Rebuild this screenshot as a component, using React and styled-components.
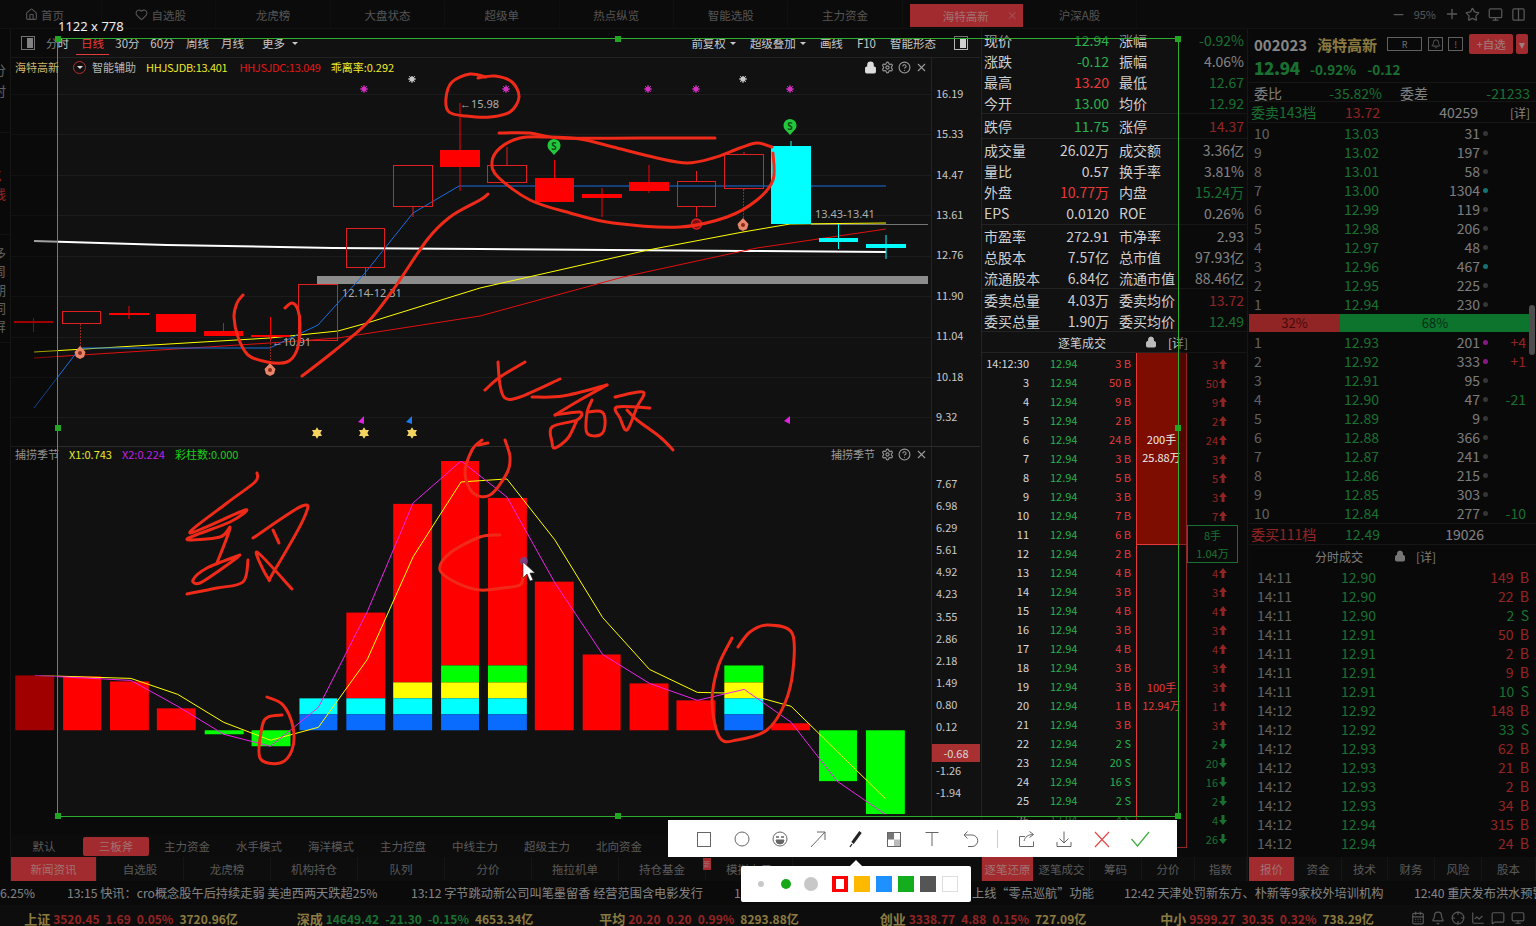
import React from 'react';
import styled, { createGlobalStyle } from 'styled-components';
import {
  House, Heart, Minus, Plus, Star, Monitor, Columns2, Lock, Settings, CircleHelp, X, Bell,
  CalendarDays, ChartLine, MessageSquare, Crosshair,
} from 'lucide-react';

const GREEN = '#28b24f';
const RED = '#e63a3a';
const ACTIVE = '#ff4449';
const LINE = '#232323';

const GlobalStyle = createGlobalStyle`
  html, body { margin: 0; padding: 0; background: #0b0b0b; overflow: hidden; }
  body { font-family: "Noto Sans CJK SC", "Noto Sans", sans-serif; color: #ccc; }
  * { box-sizing: border-box; }
`;

const Page = styled.div`
  position: relative;
  width: 1536px;
  height: 926px;
  overflow: hidden;
  display: flex;
  flex-direction: column;
  background: #111;
`;

/* ---------- top tabs ---------- */
const TopBar = styled.div`
  display: flex;
  height: 29px;
  flex-shrink: 0;
  background: #121212;
  border-bottom: 1px solid #1e1e1e;
`;
const TopTab = styled.div`
  display: flex;
  align-items: center;
  justify-content: center;
  gap: 3px;
  position: relative;
  width: ${p => p.$w || 114.4}px;
  margin-left: ${p => p.$ml || 0}px;
  padding: 0 ${p => p.$pr || 0}px 0 ${p => p.$pl || 0}px;
  height: ${p => (p.$active ? 23 : 27)}px;
  margin-top: ${p => (p.$active ? 4 : 1)}px;
  font-size: 11.5px;
  color: ${p => (p.$active ? '#ffb4b4' : '#868686')};
  background: ${p => (p.$active ? ACTIVE : 'transparent')};
  border-right: 1px solid ${p => (p.$active ? 'transparent' : '#1a1a1a')};
`;
const TabClose = styled.span`
  position: absolute;
  right: 4px;
  top: 3px;
  font-size: 11px;
  color: #ff8f8f;
`;
const TopTools = styled.div`
  margin-left: auto;
  display: flex;
  align-items: center;
  gap: 8px;
  padding-right: 10px;
  color: #8a8a8a;
  font-size: 11px;
`;
const StarTool = styled(Star)`
  margin-left: -3px;
`;

/* ---------- workspace ---------- */
const Workspace = styled.div`
  display: flex;
  height: 852px;
  flex-shrink: 0;
`;
const SideStrip = styled.div`
  width: 10px;
  flex-shrink: 0;
  overflow: hidden;
  display: flex;
  flex-direction: column;
  background: #0f0f0f;
`;
const SideGroup = styled.div`
  height: ${p => p.$h}px;
  padding-top: ${p => p.$pt}px;
  margin-left: -7px;
  width: 18px;
  font-size: 13px;
  line-height: ${p => p.$lh}px;
  color: ${p => (p.$red ? RED : '#999')};
  border-bottom: 1px solid #1c1c1c;
`;
const ChartColumn = styled.div`
  width: 970px;
  flex-shrink: 0;
  display: flex;
  flex-direction: column;
  border-left: 1px solid ${LINE};
`;
const ChartToolbar = styled.div`
  height: 29px;
  flex-shrink: 0;
  display: flex;
  align-items: center;
  padding: 0 12px 0 10px;
  font-size: 11.5px;
  white-space: nowrap;
  border-bottom: 1px solid ${LINE};
  background: #111;
`;
const PanelToggle = styled.span`
  display: inline-flex;
  justify-content: flex-end;
  flex-shrink: 0;
  width: 14px;
  height: 14px;
  border: 1px solid #b5b5b5;
  padding: 1px;
  margin-left: ${p => p.$ml || 0}px;
  &::after { content: ''; width: 6px; background: #cfcfcf; }
`;
const PeriodTab = styled.span`
  flex-shrink: 0;
  width: 35px;
  margin-left: ${p => p.$ml || 0}px;
  text-align: center;
  color: ${p => (p.$active ? RED : '#c4c4c4')};
  position: relative;
  line-height: 17px;
  &::after {
    content: '';
    display: ${p => (p.$active ? 'block' : 'none')};
    position: absolute;
    left: 1px;
    right: 1px;
    bottom: -3px;
    height: 1px;
    background: ${RED};
  }
`;
const ToolItem = styled.span`
  display: inline-flex;
  flex-shrink: 0;
  align-items: center;
  gap: ${p => p.$gap || 4}px;
  margin-left: ${p => (p.$push ? 'auto' : `${p.$ml || 0}px`)};
  color: #c8c8c8;
`;
const Caret = styled.i`
  width: 0;
  height: 0;
  border-left: 3px solid transparent;
  border-right: 3px solid transparent;
  border-top: 3px solid #c8c8c8;
`;
const Pane = styled.div`
  display: flex;
  height: ${p => p.$h}px;
  flex-shrink: 0;
  border-bottom: 1px solid ${p => p.$line || 'transparent'};
`;
const PlotColumn = styled.div`
  width: 920px;
  display: flex;
  flex-direction: column;
`;
const PaneHeader = styled.div`
  display: flex;
  align-items: center;
  height: ${p => p.$h}px;
  flex-shrink: 0;
  padding-left: 4px;
  font-size: 11px;
  white-space: nowrap;
  position: relative;
  z-index: 1;
`;
const Legend = styled.span`
  color: ${p => p.$c};
  margin-right: ${p => p.$mr ?? 10}px;
  letter-spacing: ${p => (p.$tight ? '-0.3px' : 'normal')};
`;
const FoldIcon = styled.span`
  width: 13px;
  height: 13px;
  border-radius: 50%;
  border: 1px solid #b03030;
  margin: 0 6px 0 14px;
  display: inline-flex;
  align-items: center;
  justify-content: center;
  &::after {
    content: '';
    border-left: 3px solid transparent;
    border-right: 3px solid transparent;
    border-top: 3px solid #ddd;
  }
`;
const PaneIcons = styled.span`
  margin-left: auto;
  display: flex;
  align-items: center;
  gap: 4px;
  padding-right: 3px;
  color: #9a9a9a;
`;
const Plot = styled.svg`
  display: block;
  flex: 1;
  width: 920px;
  overflow: hidden;
`;
const Axis = styled.div`
  position: relative;
  width: 49px;
  border-left: 1px solid ${LINE};
  padding-top: ${p => p.$top}px;
  font-size: 11px;
  color: #c8c8c8;
`;
const AxisLabel = styled.div`
  height: ${p => p.$step}px;
  line-height: ${p => p.$step}px;
  padding-left: 4px;
`;
const AxisBadge = styled.div`
  position: absolute;
  left: 0;
  right: 0;
  top: 297px;
  height: 18px;
  line-height: 18px;
  text-align: center;
  color: #d8d8d8;
  background: #a83030;
`;
const ModeRow = styled.div`
  display: flex;
  height: 22px;
  flex-shrink: 0;
  align-items: center;
  background: #141414;
  font-size: 11.5px;
  color: #8d8d8d;
`;
const ModeTab = styled.span`
  width: ${p => p.$w || 72}px;
  height: 19px;
  line-height: 18px;
  text-align: center;
  border-radius: 2px;
  margin: ${p => p.$m || 0};
  color: ${p => (p.$active ? '#ffb4b4' : '#8d8d8d')};
  background: ${p => (p.$active ? ACTIVE : 'transparent')};
`;
const BottomTabs = styled.div`
  display: flex;
  height: 24px;
  flex-shrink: 0;
  background: #161616;
  font-size: 11.5px;
`;
const BottomTab = styled.span`
  position: relative;
  width: ${p => p.$w}px;
  line-height: 24px;
  text-align: center;
  color: ${p => (p.$active ? '#ffb4b4' : '#8d8d8d')};
  background: ${p => (p.$active ? ACTIVE : 'transparent')};
  border-right: 1px solid #222;
`;
const NewBadge = styled.span`
  position: absolute;
  left: -3px;
  top: 1px;
  width: 8px;
  font-size: 7px;
  line-height: 12px;
  color: #ffb4b4;
  background: ${ACTIVE};
`;

/* ---------- quote column ---------- */
const InfoColumn = styled.div`
  width: 267px;
  flex-shrink: 0;
  margin-left: 1px;
  display: flex;
  flex-direction: column;
  border-left: 1px solid ${LINE};
  border-right: 1px solid ${LINE};
`;
const InfoGroup = styled.div`
  height: ${p => p.$h}px;
  flex-shrink: 0;
  display: flex;
  flex-direction: column;
  border-bottom: 1px solid ${LINE};
`;
const InfoRow = styled.div`
  flex: 1;
  display: grid;
  grid-template-columns: 125px 125px;
  column-gap: 10px;
  padding-left: 2px;
  align-items: center;
  font-size: 14px;
`;
const InfoCell = styled.div`
  display: flex;
  justify-content: space-between;
  white-space: nowrap;
  color: #cfcfcf;
`;
const Value = styled.span`
  color: ${p => p.$c || '#cfcfcf'};
`;
const TickHeader = styled.div`
  height: 21px;
  flex-shrink: 0;
  display: flex;
  align-items: center;
  font-size: 12px;
  padding-left: 76px;
  color: #cfcfcf;
  border-bottom: 1px solid ${LINE};
`;
const LockSlot = styled.span`
  display: inline-flex;
  margin-left: ${p => p.$ml}px;
  margin-right: ${p => p.$mr}px;
  color: #bbb;
`;
const TickBody = styled.div`
  flex: 1;
  min-height: 0;
  display: flex;
  overflow: hidden;
  padding-top: 1px;
`;
const TickList = styled.div`
  width: 154px;
  flex-shrink: 0;
  padding-left: 1px;
`;
const TickRow = styled.div`
  display: grid;
  grid-template-columns: 46px 50px 52px;
  height: 19px;
  line-height: 19px;
  font-size: 11px;
  text-align: right;
`;
const TickPrice = styled.span`
  color: ${GREEN};
  text-align: left;
  padding-left: 21px;
`;
const OrderColumn = styled.div`
  width: 51px;
  flex-shrink: 0;
  display: flex;
  flex-direction: column;
  margin-top: -1px;
`;
const OrderBlock = styled.div`
  height: ${p => p.$h}px;
  flex-shrink: 0;
  display: flex;
  flex-direction: column;
  align-items: center;
  justify-content: center;
  gap: 3px;
  font-size: 11px;
  line-height: 15px;
  white-space: nowrap;
  color: ${p => (p.$filled ? '#eee' : RED)};
  background: ${p => (p.$filled ? '#7c0d00' : 'transparent')};
  border: 1px solid ${RED};
  border-top: 0;
`;
const FlowColumn = styled.div`
  flex: 1;
`;
const FlowRow = styled.div`
  display: flex;
  align-items: center;
  justify-content: flex-end;
  gap: 1px;
  height: 19px;
  padding-right: 20px;
  font-size: 11px;
  color: ${p => p.$c};
`;
const FlowBox = styled.div`
  width: 51px;
  height: 38px;
  border: 1px solid ${GREEN};
  display: flex;
  flex-direction: column;
  align-items: center;
  justify-content: center;
  font-size: 11px;
  line-height: 18px;
  color: ${GREEN};
`;

/* ---------- order book column ---------- */
const BookColumn = styled.div`
  flex: 1;
  min-width: 0;
  position: relative;
  display: flex;
  flex-direction: column;
  margin-left: 1px;
  background: #0f0f0f;
`;
const StockHead = styled.div`
  height: 54px;
  flex-shrink: 0;
  padding: 4px 6px 0 5px;
  border-bottom: 1px solid ${LINE};
`;
const StockTitle = styled.div`
  display: flex;
  align-items: center;
  height: 22px;
  font-weight: 700;
  font-size: 15px;
  white-space: nowrap;
`;
const OutlineBox = styled.span`
  display: inline-flex;
  align-items: center;
  justify-content: center;
  width: ${p => p.$w}px;
  height: 14px;
  margin-left: ${p => p.$ml}px;
  border: 1px solid #999;
  font-size: 9px;
  font-weight: 400;
  color: #aaa;
`;
const RedButton = styled.span`
  display: inline-flex;
  align-items: center;
  justify-content: center;
  width: ${p => p.$w}px;
  height: 20px;
  margin-left: ${p => p.$ml}px;
  border-radius: 2px;
  font-size: 11.5px;
  font-weight: 400;
  color: #ffc4c4;
  background: ${ACTIVE};
`;
const StockPrice = styled.div`
  display: flex;
  align-items: baseline;
  font-weight: 700;
  font-size: 13.5px;
  line-height: 25px;
  color: ${GREEN};
  & > b { font-size: 17px; letter-spacing: -0.3px; margin-right: 10px; }
  & > span { margin-right: 11px; }
`;
const RatioRow = styled.div`
  height: 19px;
  flex-shrink: 0;
  display: grid;
  grid-template-columns: 128px 130px;
  column-gap: 18px;
  align-items: center;
  font-size: 14px;
  padding-left: 5px;
  border-bottom: 1px solid ${LINE};
  color: #c9c9c9;
  & > div { display: flex; justify-content: space-between; }
`;
const TotalRow = styled.div`
  height: ${p => p.$h}px;
  flex-shrink: 0;
  display: grid;
  grid-template-columns: 94px 70px ${p => p.$size}px 1fr;
  align-items: center;
  font-size: 14px;
  padding-left: 2px;
  white-space: nowrap;
  border-bottom: 1px solid ${LINE};
  border-top: ${p => (p.$ruled ? `1px solid ${LINE}` : 0)};
  color: #c9c9c9;
`;
const TotalSize = styled.span`
  text-align: right;
  color: #cfcfcf;
`;
const TotalDetail = styled.span`
  text-align: right;
  padding-right: 6px;
  font-size: 12px;
  color: #cfcfcf;
`;
const BookRows = styled.div`
  flex-shrink: 0;
  padding-top: ${p => p.$pt || 0}px;
`;
const BookRow = styled.div`
  display: grid;
  grid-template-columns: 90px 45px 91px 12px 34px;
  height: 19px;
  line-height: 19px;
  font-size: 14px;
  padding-left: 5px;
  color: #9a9a9a;
`;
const BookPrice = styled.span`
  color: ${GREEN};
`;
const BookSize = styled.span`
  text-align: right;
  color: #c4c4c4;
`;
const BookDot = styled.span`
  width: 5px;
  height: 5px;
  margin: 7px 0 0 3px;
  border-radius: 50%;
  background: ${p => p.$c || '#555'};
`;
const BookDelta = styled.span`
  text-align: right;
  color: ${p => p.$c};
`;
const RatioBar = styled.div`
  display: flex;
  height: 18px;
  flex-shrink: 0;
  width: 281px;
  font-size: 13px;
  line-height: 18px;
  text-align: center;
`;
const RatioPart = styled.div`
  flex: 0 0 ${p => p.$pct}%;
  background: ${p => p.$c};
  color: ${p => p.$t};
`;
const ScrollThumb = styled.div`
  position: absolute;
  right: 1px;
  top: 276px;
  width: 6px;
  height: 50px;
  border-radius: 3px;
  background: #7a7a7a;
`;
const TradeHeader = styled.div`
  height: 22px;
  flex-shrink: 0;
  display: flex;
  align-items: center;
  padding-left: 66px;
  font-size: 12px;
  color: #c4c4c4;
`;
const TradeRow = styled.div`
  display: grid;
  grid-template-columns: 84px 60px 128px;
  height: 19px;
  line-height: 19px;
  padding-left: 8px;
  font-size: 14px;
  color: #9a9a9a;
`;
const TradeVolume = styled.span`
  text-align: right;
  color: ${p => p.$c};
  white-space: pre;
`;
const SideTabs = styled(BottomTabs)`
  margin-top: auto;
`;

/* ---------- footer ---------- */
const Ticker = styled.div`
  display: flex;
  align-items: center;
  height: 24px;
  flex-shrink: 0;
  overflow: hidden;
  white-space: nowrap;
  font-size: 12.2px;
  color: #d0d0d0;
  background: #111;
`;
const TickerItem = styled.span`
  flex-shrink: 0;
  width: ${p => p.$w}px;
  overflow: hidden;
`;
const IndexBar = styled.div`
  display: grid;
  grid-template-columns: repeat(5, 284px) 1fr;
  align-items: start;
  height: 21px;
  padding-top: 5px;
  overflow: hidden;
  flex-shrink: 0;
  margin-left: -11px;
  background: #151515;
  font-size: 12px;
  font-weight: 700;
  white-space: nowrap;
`;
const IndexCell = styled.div`
  display: flex;
  justify-content: center;
  gap: 6px;
  line-height: 18px;
  color: #dcc266;
`;
const IndexLabel = styled.span`
  font-size: 13px;
  margin-right: -3px;
`;
const IndexValue = styled.span`
  color: ${p => p.$c};
`;
const IndexIcons = styled.div`
  display: flex;
  justify-content: flex-end;
  align-items: center;
  height: 16px;
  gap: 6px;
  padding-right: 11px;
  color: #8a8a8a;
`;

/* ---------- screen capture overlay ---------- */
const Annotations = styled.svg`
  position: absolute;
  left: 0;
  top: 0;
  width: 1536px;
  height: 926px;
  pointer-events: none;
`;
const Selection = styled.div`
  position: absolute;
  left: 57px;
  top: 38px;
  width: 1122px;
  height: 779px;
  border: 1px solid #2eae2e;
  box-shadow: 0 0 0 2000px rgba(0, 0, 0, 0.37);
  pointer-events: none;
`;
const Handle = styled.i`
  position: absolute;
  left: ${p => p.$x}%;
  top: ${p => p.$y}%;
  width: 6px;
  height: 6px;
  margin: -3px 0 0 -3px;
  background: #22a522;
`;
const SizeLabel = styled.div`
  position: absolute;
  left: 58px;
  top: 17px;
  font-family: "Noto Sans", sans-serif;
  font-size: 13px;
  line-height: 18px;
  color: #f0f0f0;
`;
const CaptureBar = styled.div`
  position: absolute;
  left: 668px;
  top: 820px;
  width: 509px;
  height: 37px;
  padding-left: 17px;
  display: flex;
  align-items: center;
  background: #fff;
`;
const CaptureTool = styled.span`
  width: 38px;
  display: flex;
  justify-content: center;
  color: ${p => p.$c || '#666'};
`;
const CaptureSep = styled.span`
  width: 1px;
  height: 18px;
  margin: 0 9px 0 8px;
  background: #ccc;
`;
const ColorPop = styled.div`
  position: absolute;
  left: 741px;
  top: 866px;
  width: 230px;
  height: 36px;
  padding-left: 7px;
  display: flex;
  align-items: center;
  background: #fff;
  border-radius: 2px;
  &::before {
    content: '';
    position: absolute;
    left: 109px;
    top: -6px;
    border-left: 6px solid transparent;
    border-right: 6px solid transparent;
    border-bottom: 6px solid #fff;
  }
`;
const SizeDotSlot = styled.span`
  width: 25px;
  display: flex;
  justify-content: center;
`;
const SizeDot = styled.span`
  width: ${p => p.$d}px;
  height: ${p => p.$d}px;
  border-radius: 50%;
  background: ${p => p.$c};
`;
const Swatch = styled.span`
  width: 16px;
  height: 16px;
  margin-left: ${p => p.$ml || 6}px;
  background: ${p => p.$c};
  border: ${p => (p.$c === '#fff' ? '1px solid #ddd' : 'none')};
  display: flex;
  align-items: center;
  justify-content: center;
  &::after {
    content: '';
    display: ${p => (p.$picked ? 'block' : 'none')};
    width: 8px;
    height: 10px;
    background: #fff;
  }
`;

/* ---------- data ---------- */
const TOP_TABS = ['龙虎榜', '大盘状态', '超级单', '热点纵览', '智能选股', '主力资金'];
const PERIODS = ['30分', '60分', '周线', '月线'];
const PRICE_AXIS = ['16.19', '15.33', '14.47', '13.61', '12.76', '11.90', '11.04', '10.18', '9.32'];
const LOWER_AXIS = ['7.67', '6.98', '6.29', '5.61', '4.92', '4.23', '3.55', '2.86', '2.18', '1.49', '0.80', '0.12', '', '-1.26', '-1.94'];
const MODES = ['主力资金', '水手模式', '海洋模式', '主力控盘', '中线主力', '超级主力', '北向资金'];
const NEWS_TABS = ['自选股', '龙虎榜', '机构持仓', '队列', '分价', '拖拉机单', '持仓基金'];

const INFO_GROUPS = [
  { h: 85, rows: [
    ['现价', '12.94', GREEN, '涨幅', '-0.92%', GREEN],
    ['涨跌', '-0.12', GREEN, '振幅', '4.06%'],
    ['最高', '13.20', RED, '最低', '12.67', GREEN],
    ['今开', '13.00', GREEN, '均价', '12.92', GREEN],
  ] },
  { h: 25, rows: [['跌停', '11.75', GREEN, '涨停', '14.37', RED]] },
  { h: 86, rows: [
    ['成交量', '26.02万', null, '成交额', '3.36亿'],
    ['量比', '0.57', null, '换手率', '3.81%'],
    ['外盘', '10.77万', RED, '内盘', '15.24万', GREEN],
    ['EPS', '0.0120', null, 'ROE', '0.26%'],
  ] },
  { h: 64, rows: [
    ['市盈率', '272.91', null, '市净率', '2.93'],
    ['总股本', '7.57亿', null, '总市值', '97.93亿'],
    ['流通股本', '6.84亿', null, '流通市值', '88.46亿'],
  ] },
  { h: 43, rows: [
    ['委卖总量', '4.03万', null, '委卖均价', '13.72', RED],
    ['委买总量', '1.90万', null, '委买均价', '12.49', GREEN],
  ] },
];

const TICK_VOLS = [3, 50, 9, 2, 24, 3, 5, 3, 7, 6, 2, 4, 3, 4, 3, 4, 3, 3, 1, 3, 2, 20, 16, 2, 4, 26];
const isSell = i => i >= 20;

const SELL_BOOK = [
  [10, '13.03', 31], [9, '13.02', 197], [8, '13.01', 58], [7, '13.00', 1304, '#1fb5b5'], [6, '12.99', 119],
  [5, '12.98', 206], [4, '12.97', 48], [3, '12.96', 467, '#1fb5b5'], [2, '12.95', 225], [1, '12.94', 230],
];
const BUY_BOOK = [
  [1, '12.93', 201, '#d428d4', '+4'], [2, '12.92', 333, '#d428d4', '+1'], [3, '12.91', 95], [4, '12.90', 47, null, '-21'],
  [5, '12.89', 9], [6, '12.88', 366], [7, '12.87', 241], [8, '12.86', 215], [9, '12.85', 303], [10, '12.84', 277, null, '-10'],
];
const TRADES = [
  ['14:11', '12.90', '149', 'B'], ['14:11', '12.90', '22', 'B'], ['14:11', '12.90', '2', 'S'], ['14:11', '12.91', '50', 'B'],
  ['14:11', '12.91', '2', 'B'], ['14:11', '12.91', '9', 'B'], ['14:11', '12.91', '10', 'S'], ['14:12', '12.92', '148', 'B'],
  ['14:12', '12.92', '33', 'S'], ['14:12', '12.93', '62', 'B'], ['14:12', '12.93', '21', 'B'], ['14:12', '12.93', '2', 'B'],
  ['14:12', '12.93', '34', 'B'], ['14:12', '12.94', '315', 'B'], ['14:12', '12.94', '24', 'B'],
];
const INDEXES = [
  ['上证', '3520.45', '1.69', '0.05%', '3720.96亿', RED],
  ['深成', '14649.42', '-21.30', '-0.15%', '4653.34亿', GREEN],
  ['平均', '20.20', '0.20', '0.99%', '8293.88亿', RED],
  ['创业', '3338.77', '4.88', '0.15%', '727.09亿', RED],
  ['中小', '9599.27', '30.35', '0.32%', '738.29亿', RED],
];

// x, width, body top, body bottom, wick top, wick bottom, kind
const CANDLES = [
  [14, 39, 321, 323, 318, 332, 'solid'], [62, 39, 311, 324, 311, 324, 'hollow'], [109, 40, 313, 315, 306, 319, 'solid'],
  [156, 40, 314, 332, 314, 332, 'solid'], [204, 39, 331, 336, 323, 336, 'solid'], [251, 39, 335, 337, 317, 340, 'solid'],
  [298, 40, 284, 341, 284, 341, 'hollow'], [346, 39, 228, 268, 228, 276, 'hollow'], [393, 40, 165, 207, 165, 217, 'hollow'],
  [440, 40, 150, 167, 103, 191, 'solid'], [487, 40, 165, 183, 147, 183, 'hollow'], [535, 39, 178, 202, 160, 202, 'solid'],
  [582, 40, 194, 198, 188, 217, 'solid'], [629, 40, 182, 191, 165, 193, 'solid'], [677, 39, 181, 207, 171, 217, 'hollow'],
  [724, 40, 154, 189, 152, 190, 'hollow'], [771, 40, 146, 224, 141, 224, 'cyan'], [819, 39, 238, 242, 224, 249, 'cyan'],
  [866, 40, 244, 248, 235, 259, 'cyan'],
];
const LINES = [
  ['#ffffff', 2, [[34, 241], [167, 245], [333, 248], [480, 249], [747, 251], [886, 252]]],
  ['#ffff00', 1, [[34, 352], [270, 338], [338, 331], [367, 323], [480, 288], [648, 250], [743, 232], [790, 224], [886, 223]]],
  ['#e01010', 1, [[34, 358], [270, 343], [338, 338], [480, 316], [623, 277], [757, 248], [886, 229]]],
  ['#1a6fe0', 1, [[34, 408], [80, 348], [270, 348], [318, 325], [365, 273], [413, 213], [459, 186], [886, 186]]],
];
const GRID_Y = [94, 134, 175, 215, 256, 296, 337, 377, 417];

const stack = (x, w, top) => [
  ['#ff0000', x, w, top, 666], ['#00ff00', x, w, 666, 683], ['#ffff00', x, w, 683, 699],
  ['#00ffff', x, w, 699, 715], ['#0a6cff', x, w, 715, 731],
];
const plain = (c, x, w, a, b) => [[c, x, w, a, b]];
const BARS = [
  ...plain('#ff0000', 14, 39, 676, 731), ...plain('#ff0000', 62, 38, 677, 731), ...plain('#ff0000', 109, 39, 682, 731),
  ...plain('#ff0000', 156, 39, 709, 731), ...plain('#00ff00', 204, 39, 731, 735), ...plain('#00ff00', 251, 39, 731, 747),
  ...plain('#00ffff', 299, 38, 699, 715), ...plain('#0a6cff', 299, 38, 715, 731),
  ...plain('#ff0000', 346, 39, 613, 699), ...plain('#00ffff', 346, 39, 699, 715), ...plain('#0a6cff', 346, 39, 715, 731),
  ...plain('#ff0000', 393, 39, 504, 683), ...plain('#ffff00', 393, 39, 683, 699), ...plain('#00ffff', 393, 39, 699, 715), ...plain('#0a6cff', 393, 39, 715, 731),
  ...stack(441, 38, 461), ...stack(488, 39, 498),
  ...plain('#ff0000', 535, 39, 582, 731), ...plain('#ff0000', 583, 38, 655, 731), ...plain('#ff0000', 630, 39, 684, 731),
  ...plain('#ff0000', 677, 39, 701, 731), ...stack(725, 39, 666).slice(1),
  ...plain('#ff0000', 772, 39, 724, 731), ...plain('#00ff00', 820, 38, 731, 782), ...plain('#00ff00', 867, 39, 731, 815),
];
const X1_LINE = [[34, 676], [130, 679], [177, 695], [223, 723], [270, 741], [318, 728], [367, 660], [413, 557], [461, 482], [507, 479], [555, 540], [603, 618], [650, 670], [698, 693], [745, 694], [792, 707], [887, 800]];
const X2_LINE = [[34, 676], [130, 681], [177, 707], [223, 735], [270, 747], [318, 708], [367, 612], [413, 503], [461, 461], [507, 497], [555, 583], [603, 655], [650, 684], [698, 701], [745, 690], [792, 723], [838, 782], [886, 815]];

const INK = [
  [[486, 77], [470, 74], [452, 82], [446, 98], [449, 112], [466, 116], [490, 117], [510, 112], [519, 97], [512, 82], [495, 76], [478, 78]],
  [[499, 133], [530, 133], [560, 138], [640, 138], [715, 138]],
  [[772, 147], [757, 143], [740, 148], [713, 158], [687, 163], [657, 158], [613, 147], [580, 139], [547, 137], [520, 138], [500, 148], [492, 162], [498, 177], [530, 200], [570, 213], [613, 223], [680, 227], [727, 217], [757, 200], [773, 180], [773, 153]],
  [[243, 295], [237, 303], [234, 317], [238, 337], [248, 355], [267, 362], [287, 362], [297, 350], [300, 327], [298, 310], [292, 303], [285, 308]],
  [[302, 376], [333, 352], [367, 323], [393, 290], [427, 240], [450, 217], [480, 200], [488, 194]],
  [[485, 390], [500, 377], [525, 362]],
  [[498, 362], [500, 385], [505, 398], [520, 397], [560, 379]],
  [[532, 397], [563, 396], [607, 385]],
  [[607, 385], [580, 400], [555, 415]],
  [[555, 415], [580, 412], [577, 420], [552, 427], [552, 442], [555, 448], [568, 438], [577, 420]],
  [[592, 400], [587, 413], [587, 433], [600, 435], [605, 425], [602, 412], [587, 412]],
  [[615, 397], [643, 392], [637, 407], [627, 430], [620, 418], [617, 407], [650, 408]],
  [[627, 410], [637, 420], [660, 437], [673, 450]],
  [[257, 473], [255, 482], [227, 503], [190, 533], [245, 510], [230, 522], [187, 539], [220, 537], [230, 528], [217, 563]],
  [[240, 555], [207, 568], [193, 580], [200, 583], [220, 570], [238, 557]],
  [[248, 560], [243, 582], [217, 588], [187, 594]],
  [[253, 538], [302, 506], [304, 518], [273, 573], [268, 578], [257, 552], [292, 589]],
  [[273, 530], [279, 543]],
  [[267, 697], [283, 705], [293, 727], [292, 750], [280, 763], [260, 758], [262, 727], [268, 717], [282, 715]],
  [[482, 440], [472, 450], [465, 473], [473, 493], [490, 495], [507, 473], [510, 457], [505, 440]],
  [[478, 445], [488, 443]],
  [[500, 535], [480, 537], [450, 553], [440, 570], [457, 583], [480, 590], [503, 588], [520, 585], [523, 577]],
  [[732, 638], [718, 667], [712, 703], [720, 738], [737, 740], [767, 730], [785, 703], [793, 670], [792, 633], [768, 625], [750, 632], [738, 647]],
];

const smooth = pts => {
  let d = `M${pts[0][0]},${pts[0][1]}`;
  for (let i = 0; i < pts.length - 1; i++) {
    const p0 = pts[Math.max(i - 1, 0)];
    const p1 = pts[i];
    const p2 = pts[i + 1];
    const p3 = pts[Math.min(i + 2, pts.length - 1)];
    const c1x = p1[0] + (p2[0] - p0[0]) / 6;
    const c1y = p1[1] + (p2[1] - p0[1]) / 6;
    const c2x = p2[0] - (p3[0] - p1[0]) / 6;
    const c2y = p2[1] - (p3[1] - p1[1]) / 6;
    d += ` C${c1x.toFixed(1)},${c1y.toFixed(1)} ${c2x.toFixed(1)},${c2y.toFixed(1)} ${p2[0]},${p2[1]}`;
  }
  return d;
};
const poly = pts => pts.map(p => p.join(',')).join(' ');

/* ---------- chart drawings ---------- */
function Candle({ data }) {
  const [x, w, top, bot, hi, lo, kind] = data;
  const c = kind === 'cyan' ? '#00ffff' : kind === 'solid' ? '#ff0000' : '#e02020';
  const mid = x + w / 2;
  const fill = kind === 'hollow' ? '#111' : c;
  return (
    <g>
      <line x1={mid} x2={mid} y1={hi} y2={top} stroke={c} />
      <line x1={mid} x2={mid} y1={bot} y2={lo} stroke={c} />
      <rect x={x + 0.5} y={top + 0.5} width={w - 1} height={bot - top - 1} fill={kind === 'hollow' ? 'none' : fill} stroke={c} />
    </g>
  );
}

function Burst({ x, y, c }) {
  const rays = [0, 45, 90, 135];
  return (
    <g stroke={c} strokeWidth="1">
      {rays.map(a => (
        <line
          key={a}
          x1={x - 4 * Math.cos((a * Math.PI) / 180)}
          y1={y - 4 * Math.sin((a * Math.PI) / 180)}
          x2={x + 4 * Math.cos((a * Math.PI) / 180)}
          y2={y + 4 * Math.sin((a * Math.PI) / 180)}
        />
      ))}
      <circle cx={x} cy={y} r="2.6" fill={c} stroke="none" />
    </g>
  );
}

function GoldStar({ x, y }) {
  const pts = [];
  for (let i = 0; i < 12; i++) {
    const r = i % 2 ? 3.4 : 5.8;
    const a = (i * Math.PI) / 6 - Math.PI / 2;
    pts.push([(x + r * Math.cos(a)).toFixed(1), (y + r * Math.sin(a)).toFixed(1)]);
  }
  return <polygon points={poly(pts)} fill="#f4d35e" />;
}

function SellPin({ x, y }) {
  return (
    <g>
      <path d={`M${x},${y + 9} L${x - 5.5},${y + 3} A6.5,6.5 0 1 1 ${x + 5.5},${y + 3} Z`} fill="#22c83c" />
      <text x={x} y={y + 3.5} fontSize="10" fontWeight="700" textAnchor="middle" fill="#0c4a16" fontFamily="Noto Sans">S</text>
    </g>
  );
}

function BuyMark({ x, y }) {
  return (
    <g>
      <path d={`M${x},${y - 7} L${x + 5.5},${y - 1} L${x + 4},${y + 4} L${x},${y + 6} L${x - 4},${y + 4} L${x - 5.500},${y - 1} Z`} fill="#e8866c" />
      <circle cx={x} cy={y} r="2" fill="#8a2a18" />
    </g>
  );
}

const chartText = { fontSize: 11, fill: '#adadad', fontFamily: 'Noto Sans' };

function PricePlot() {
  return (
    <Plot viewBox="11 76 920 370">
      {GRID_Y.map(y => <line key={y} x1="11" x2="931" y1={y + 0.5} y2={y + 0.5} stroke="#1c1c1c" />)}
      <rect x="317" y="276" width="611" height="8" fill="#8c8c8c" />
      <line x1="811" x2="928" y1="224.5" y2="224.5" stroke="#777" />
      {LINES.map(([c, w, pts]) => <polyline key={c} points={poly(pts)} fill="none" stroke={c} strokeWidth={w} />)}
      <g stroke="#8a2a20" strokeDasharray="2 1">
        <line x1="80.5" x2="80.5" y1="324" y2="348" />
        <line x1="270.5" x2="270.5" y1="340" y2="364" />
        <line x1="743.5" x2="743.5" y1="189" y2="218" />
      </g>
      {CANDLES.map(c => <Candle key={c[0]} data={c} />)}
      {[[364, 89], [506, 89], [648, 89], [696, 89], [790, 89]].map(([x, y]) => <Burst key={x} x={x} y={y} c="#d22fc0" />)}
      <Burst x={412} y={79} c="#c8c8c8" />
      <Burst x={743} y={79} c="#c8c8c8" />
      {[317, 364, 412].map(x => <GoldStar key={x} x={x} y={433} />)}
      <polygon points="364,416 364,424 358,422" fill="#e020e0" />
      <polygon points="412,416 412,424 406,422" fill="#1a78f0" />
      <polygon points="790,416 790,424 784,421" fill="#e020e0" />
      <SellPin x={554} y={146} />
      <SellPin x={790} y={126} />
      <BuyMark x={80} y={353} />
      <BuyMark x={270} y={370} />
      <BuyMark x={743} y={225} />
      <circle cx="696.5" cy="224" r="5" fill="#7a1010" stroke="#e02020" strokeWidth="1.5" />
      <path d="M693,225 q3.5,3 7,0" fill="none" stroke="#e02020" />
      <text x="460" y="108" {...chartText}>←15.98</text>
      <text x="272" y="346" {...chartText}>←10.91</text>
      <text x="342" y="297" {...chartText}>12.14-12.31</text>
      <text x="815" y="218" {...chartText}>13.43-13.41</text>
    </Plot>
  );
}

function IndicatorPlot() {
  return (
    <Plot viewBox="11 461 920 374">
      {BARS.map(([c, x, w, a, b], i) => <rect key={i} x={x} y={a} width={w} height={b - a} fill={c} />)}
      <polyline points={poly(X1_LINE)} fill="none" stroke="#ffff00" strokeWidth="1" />
      <polyline points={poly(X2_LINE)} fill="none" stroke="#ee22ee" strokeWidth="1" />
    </Plot>
  );
}

/* ---------- capture tool icons ---------- */
const capSvg = { width: 18, height: 18, viewBox: '0 0 18 18', fill: 'none', stroke: 'currentColor', strokeWidth: 1 };
const CaptureIcons = {
  rect: <svg {...capSvg}><rect x="2.5" y="2.5" width="13" height="14" /></svg>,
  circle: <svg {...capSvg}><circle cx="9" cy="9" r="7" /></svg>,
  smile: (
    <svg {...capSvg}>
      <circle cx="9" cy="9" r="7" />
      <path d="M5 7h3M10 7h3" strokeWidth="1.5" />
      <path d="M5 10h8a4 4 0 0 1-8 0z" fill="#666" />
    </svg>
  ),
  arrow: <svg {...capSvg}><path d="M2 17 16 2M8 2h8v8" /></svg>,
  pen: <svg {...capSvg}><path d="M13.5 2 5.5 13" stroke="#222" strokeWidth="3" /><path d="M5 14l-2 3" stroke="#222" strokeWidth="1.3" /></svg>,
  mosaic: (
    <svg {...capSvg}>
      <rect x="2.5" y="2.5" width="13" height="14" />
      <rect x="3" y="3" width="6" height="6.5" fill="#777" stroke="none" />
      <rect x="9" y="9.5" width="6" height="6.5" fill="#bbb" stroke="none" />
    </svg>
  ),
  text: <svg {...capSvg}><path d="M2.5 2.5h13M9 2.5V16" /></svg>,
  undo: <svg {...capSvg}><path d="M6.5 1.5 3 5l3.5 3.5M3 5h8a4.5 4.5 0 0 1 0 11.500H7" /></svg>,
  share: <svg {...capSvg}><path d="M8 6.500H2.500v10h14v-5" /><path d="M7 11c1-4 4-6.500 9-6.500M12.500 1.500 16.500 4.500l-4 3" /></svg>,
  save: <svg {...capSvg}><path d="M9 1.500V13M4.500 8.500 9 13l4.500-4.500M2 12v4.500h14V12" /></svg>,
  cancel: <svg {...capSvg} strokeWidth="1.2"><path d="M2 2l14 15M16 2 2 17" /></svg>,
  done: <svg {...capSvg} width="20" viewBox="0 0 20 18" strokeWidth="1.2"><path d="M1.500 9l6 7L19 2" /></svg>,
};

const Arrow = ({ up }) => (
  <svg width="8" height="10" viewBox="0 0 8 10">
    <path d={up ? 'M4 0 8 5H5.500V10H2.500V5H0Z' : 'M4 10 8 5H5.500V0H2.500V5H0Z'} fill="currentColor" />
  </svg>
);

export default function App() {
  return (
    <Page>
      <GlobalStyle />
      <TopBar>
        <TopTab $w={102} $pr={12}><House size={13} />首页</TopTab>
        <TopTab $pl={4}><Heart size={13} />自选股</TopTab>
        {TOP_TABS.map(t => <TopTab key={t}>{t}</TopTab>)}
        <TopTab $w={113} $ml={7} $active>海特高新<TabClose>×</TabClose></TopTab>
        <TopTab>沪深A股</TopTab>
        <TopTools>
          <Minus size={15} />
          95%
          <Plus size={16} />
          <StarTool size={15} />
          <Monitor size={15} />
          <Columns2 size={15} />
        </TopTools>
      </TopBar>

      <Workspace>
        <SideStrip>
          <SideGroup $h={104} $pt={30} $lh={21}>分<br />时</SideGroup>
          <SideGroup $h={102} $pt={34} $lh={18} $red>K<br />线</SideGroup>
          <SideGroup $h={108} $pt={9} $lh={18.300}>多<br />周<br />期<br />同<br />屏</SideGroup>
        </SideStrip>

        <ChartColumn>
          <ChartToolbar>
            <PanelToggle />
            <PeriodTab $ml={5}>分时</PeriodTab>
            <PeriodTab $active>日线</PeriodTab>
            {PERIODS.map(p => <PeriodTab key={p}>{p}</PeriodTab>)}
            <ToolItem $ml={12} $gap={7}>更多<Caret /></ToolItem>
            <ToolItem $push>前复权<Caret /></ToolItem>
            <ToolItem $ml={14}>超级叠加<Caret /></ToolItem>
            <ToolItem $ml={14}>画线</ToolItem>
            <ToolItem $ml={14}>F10</ToolItem>
            <ToolItem $ml={14}>智能形态</ToolItem>
            <PanelToggle $ml={18} />
          </ChartToolbar>

          <Pane $h={389} $line="#2c2c2c">
            <PlotColumn>
              <PaneHeader $h={18}>
                <Legend $c="#cdb56a" $mr={0}>海特高新</Legend>
                <FoldIcon />
                <Legend $c="#b5b5b5">智能辅助</Legend>
                <Legend $c="#e8e82a" $mr={12} $tight>HHJSJDB:13.401</Legend>
                <Legend $c="#e01818" $tight>HHJSJDC:13.049</Legend>
                <Legend $c="#eded2a">乖离率:0.292</Legend>
                <PaneIcons>
                  <Lock size={13} fill="#ddd" color="#ddd" />
                  <Settings size={13} />
                  <CircleHelp size={13} />
                  <X size={13} />
                </PaneIcons>
              </PaneHeader>
              <PricePlot />
            </PlotColumn>
            <Axis $top={14.800}>
              {PRICE_AXIS.map(v => <AxisLabel key={v} $step={40.400}>{v}</AxisLabel>)}
            </Axis>
          </Pane>

          <Pane $h={388}>
            <PlotColumn>
              <PaneHeader $h={14}>
                <Legend $c="#8f8f8f">捕捞季节</Legend>
                <Legend $c="#e8e82a">X1:0.743</Legend>
                <Legend $c="#c020e0">X2:0.224</Legend>
                <Legend $c="#18d018">彩柱数:0.000</Legend>
                <PaneIcons>
                  <Legend $c="#9a9a9a" $mr={2}>捕捞季节</Legend>
                  <Settings size={13} />
                  <CircleHelp size={13} />
                  <X size={13} />
                </PaneIcons>
              </PaneHeader>
              <IndicatorPlot />
            </PlotColumn>
            <Axis $top={25}>
              {LOWER_AXIS.map((v, i) => <AxisLabel key={i} $step={22.100}>{v}</AxisLabel>)}
              <AxisBadge>-0.68</AxisBadge>
            </Axis>
          </Pane>

          <ModeRow>
            <ModeTab $w={66}>默认</ModeTab>
            <ModeTab $w={66} $m="0 2px 0 6px" $active>三板斧</ModeTab>
            {MODES.map(m => <ModeTab key={m}>{m}</ModeTab>)}
          </ModeRow>

          <BottomTabs>
            <BottomTab $w={86} $active>新闻资讯</BottomTab>
            {NEWS_TABS.map(t => <BottomTab key={t} $w={87}>{t}</BottomTab>)}
            <BottomTab $w={87}><NewBadge>新</NewBadge>模拟上云</BottomTab>
          </BottomTabs>
        </ChartColumn>

        <InfoColumn>
          {INFO_GROUPS.map(g => (
            <InfoGroup key={g.h} $h={g.h}>
              {g.rows.map(r => (
                <InfoRow key={r[0]}>
                  <InfoCell>{r[0]}<Value $c={r[2]}>{r[1]}</Value></InfoCell>
                  <InfoCell>{r[3]}<Value $c={r[5]}>{r[4]}</Value></InfoCell>
                </InfoRow>
              ))}
            </InfoGroup>
          ))}
          <TickHeader>
            逐笔成交
            <LockSlot $ml={39} $mr={11}><Lock size={12} fill="#bbb" /></LockSlot>
            [详]
          </TickHeader>
          <TickBody>
            <TickList>
              {TICK_VOLS.map((v, i) => (
                <TickRow key={i}>
                  <Value $c="#d8d8d8">{i === 0 ? '14:12:30' : i + 2}</Value>
                  <TickPrice>12.94</TickPrice>
                  <Value $c={isSell(i) ? GREEN : RED}>{v} {isSell(i) ? 'S' : 'B'}</Value>
                </TickRow>
              ))}
            </TickList>
            <OrderColumn>
              <OrderBlock $h={192} $filled><span>200手</span><span>25.88万</span></OrderBlock>
              <OrderBlock $h={303}><span>100手</span><span>12.94万</span></OrderBlock>
            </OrderColumn>
            <FlowColumn>
              {TICK_VOLS.slice(0, 9).map((v, i) => (
                <FlowRow key={i} $c={RED}>{v}<Arrow up /></FlowRow>
              ))}
              <FlowBox><span>8手</span><span>1.04万</span></FlowBox>
              {TICK_VOLS.slice(11).map((v, i) => (
                <FlowRow key={i} $c={isSell(i + 11) ? GREEN : RED}>{v}<Arrow up={!isSell(i + 11)} /></FlowRow>
              ))}
            </FlowColumn>
          </TickBody>
          <SideTabs>
            <BottomTab $w={52} $active>逐笔还原</BottomTab>
            <BottomTab $w={56}>逐笔成交</BottomTab>
            <BottomTab $w={52}>筹码</BottomTab>
            <BottomTab $w={53}>分价</BottomTab>
            <BottomTab $w={52}>指数</BottomTab>
          </SideTabs>
        </InfoColumn>

        <BookColumn>
          <StockHead>
            <StockTitle>
              <Value $c="#d4d4d4">002023</Value>
              <Value $c="#dcc266" style={{ marginLeft: 10 }}>海特高新</Value>
              <OutlineBox $w={35} $ml={10}>R</OutlineBox>
              <OutlineBox $w={15} $ml={6}><Bell size={10} /></OutlineBox>
              <OutlineBox $w={15} $ml={5}>!</OutlineBox>
              <RedButton $w={44} $ml={6}>+自选</RedButton>
              <RedButton $w={12} $ml={3}>▾</RedButton>
            </StockTitle>
            <StockPrice><b>12.94</b><span>-0.92%</span><span>-0.12</span></StockPrice>
          </StockHead>
          <RatioRow>
            <div>委比<Value $c={GREEN}>-35.82%</Value></div>
            <div>委差<Value $c={GREEN}>-21233</Value></div>
          </RatioRow>
          <TotalRow $h={21} $size={63}>
            <Value $c={GREEN}>委卖143档</Value>
            <Value $c={RED}>13.72</Value>
            <TotalSize>40259</TotalSize>
            <TotalDetail>[详]</TotalDetail>
          </TotalRow>
          <BookRows $pt={1}>
            {SELL_BOOK.map(([lv, price, size, dot]) => (
              <BookRow key={lv}>
                <span>{lv}</span>
                <BookPrice>{price}</BookPrice>
                <BookSize>{size}</BookSize>
                <BookDot $c={dot} />
              </BookRow>
            ))}
          </BookRows>
          <RatioBar>
            <RatioPart $pct={32.400} $c="#e63a3a" $t="#6e0f0f">32%</RatioPart>
            <RatioPart $pct={67.600} $c="#15b84a" $t="#0c4a1e">68%</RatioPart>
          </RatioBar>
          <BookRows $pt={1}>
            {BUY_BOOK.map(([lv, price, size, dot, delta]) => (
              <BookRow key={lv}>
                <span>{lv}</span>
                <BookPrice>{price}</BookPrice>
                <BookSize>{size}</BookSize>
                <BookDot $c={dot} />
                <BookDelta $c={delta && delta[0] === '+' ? RED : GREEN}>{delta}</BookDelta>
              </BookRow>
            ))}
          </BookRows>
          <TotalRow $h={22} $size={69} $ruled>
            <Value $c={RED}>委买111档</Value>
            <Value $c={GREEN}>12.49</Value>
            <TotalSize>19026</TotalSize>
          </TotalRow>
          <TradeHeader>
            分时成交
            <LockSlot $ml={31} $mr={10}><Lock size={12} fill="#bbb" /></LockSlot>
            [详]
          </TradeHeader>
          <BookRows $pt={1}>
            {TRADES.map((t, i) => (
              <TradeRow key={i}>
                <span>{t[0]}</span>
                <BookPrice>{t[1]}</BookPrice>
                <TradeVolume $c={t[3] === 'B' ? RED : GREEN}>{t[2]}  {t[3]}</TradeVolume>
              </TradeRow>
            ))}
          </BookRows>
          <ScrollThumb />
          <SideTabs>
            <BottomTab $w={46} $active>报价</BottomTab>
            <BottomTab $w={47}>资金</BottomTab>
            <BottomTab $w={46}>技术</BottomTab>
            <BottomTab $w={47}>财务</BottomTab>
            <BottomTab $w={47}>风险</BottomTab>
            <BottomTab $w={54}>股本</BottomTab>
          </SideTabs>
        </BookColumn>
      </Workspace>

      <Ticker>
        <TickerItem $w={67}>6.25%</TickerItem>
        <TickerItem $w={344}>13:15 快讯：cro概念股午后持续走弱 美迪西两天跌超25%</TickerItem>
        <TickerItem $w={323}>13:12 字节跳动新公司叫笔墨留香 经营范围含电影发行</TickerItem>
        <TickerItem $w={238}>1</TickerItem>
        <TickerItem $w={152}>上线“零点巡航”功能</TickerItem>
        <TickerItem $w={290}>12:42 天津处罚新东方、朴新等9家校外培训机构</TickerItem>
        <TickerItem $w={122}>12:40 重庆发布洪水预警</TickerItem>
      </Ticker>

      <IndexBar>
        {INDEXES.map(([name, val, chg, pct, amt, c]) => (
          <IndexCell key={name}>
            <IndexLabel>{name}</IndexLabel>
            <IndexValue $c={c}>{val}</IndexValue>
            <IndexValue $c={c}>{chg}</IndexValue>
            <IndexValue $c={c}>{pct}</IndexValue>
            <span>{amt}</span>
          </IndexCell>
        ))}
        <IndexIcons>
          <CalendarDays size={14} />
          <Bell size={14} />
          <Crosshair size={14} />
          <ChartLine size={14} />
          <MessageSquare size={14} />
          <Monitor size={14} />
        </IndexIcons>
      </IndexBar>

      <Annotations viewBox="0 0 1536 926">
        {INK.map((pts, i) => (
          <path key={i} d={smooth(pts)} fill="none" stroke="#f02a18" strokeWidth="3" strokeLinecap="round" strokeLinejoin="round" />
        ))}
        <circle cx="524" cy="561" r="4" fill="#4a5ab0" opacity="0.7" />
        <polygon points="523,562 523,578 527,574 530,581 533,580 530,573 535,573" fill="#fff" stroke="#222" strokeWidth="0.6" />
      </Annotations>

      <Selection>
        {[[0, 0], [50, 0], [100, 0], [0, 50], [100, 50], [0, 100], [50, 100], [100, 100]].map(([x, y]) => (
          <Handle key={`${x}-${y}`} $x={x} $y={y} />
        ))}
      </Selection>
      <SizeLabel>1122 x 778</SizeLabel>

      <CaptureBar>
        <CaptureTool>{CaptureIcons.rect}</CaptureTool>
        <CaptureTool>{CaptureIcons.circle}</CaptureTool>
        <CaptureTool>{CaptureIcons.smile}</CaptureTool>
        <CaptureTool>{CaptureIcons.arrow}</CaptureTool>
        <CaptureTool>{CaptureIcons.pen}</CaptureTool>
        <CaptureTool>{CaptureIcons.mosaic}</CaptureTool>
        <CaptureTool>{CaptureIcons.text}</CaptureTool>
        <CaptureTool>{CaptureIcons.undo}</CaptureTool>
        <CaptureSep />
        <CaptureTool>{CaptureIcons.share}</CaptureTool>
        <CaptureTool>{CaptureIcons.save}</CaptureTool>
        <CaptureTool $c="#e8484a">{CaptureIcons.cancel}</CaptureTool>
        <CaptureTool $c="#3cae3c">{CaptureIcons.done}</CaptureTool>
      </CaptureBar>

      <ColorPop>
        <SizeDotSlot><SizeDot $d={6} $c="#c8c8c8" /></SizeDotSlot>
        <SizeDotSlot><SizeDot $d={10} $c="#17a817" /></SizeDotSlot>
        <SizeDotSlot><SizeDot $d={14} $c="#c8c8c8" /></SizeDotSlot>
        <Swatch $c="#ff0000" $ml={9} $picked />
        <Swatch $c="#fdb900" />
        <Swatch $c="#1e90ff" />
        <Swatch $c="#13ad1e" />
        <Swatch $c="#555555" />
        <Swatch $c="#fff" />
      </ColorPop>
    </Page>
  );
}
